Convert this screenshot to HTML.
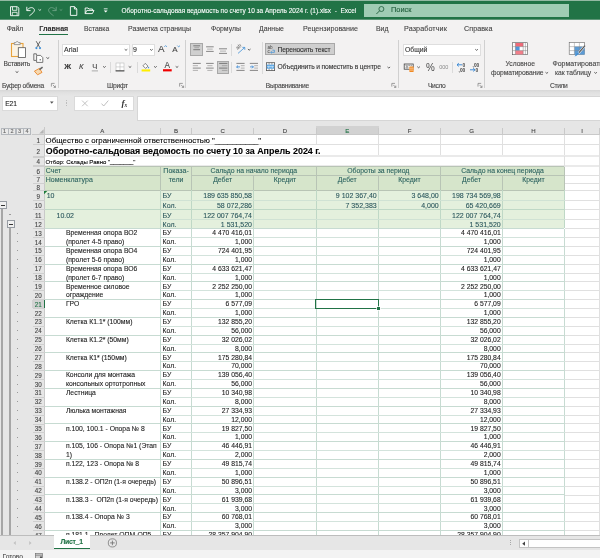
<!DOCTYPE html>
<html lang="ru"><head><meta charset="utf-8"><title>Excel</title>
<style>
html,body{margin:0;padding:0}
body{width:600px;height:558px;overflow:hidden;position:relative;background:#e6e6e6;font-family:"Liberation Sans", sans-serif;}
#root{position:absolute;left:0;top:0;width:600px;height:558px;overflow:hidden;will-change:transform}
.t{position:absolute;white-space:nowrap;-webkit-text-stroke:0.1px currentColor}
.a{position:absolute}
svg{position:absolute;overflow:visible}

</style></head><body><div id="root">
<div class="a" style="left:0.00px;top:0.00px;width:600.00px;height:19.60px;background:#217346;"></div>
<div class="a" style="left:0.00px;top:0.00px;width:600.00px;height:0.90px;background:#93b9a3;"></div>
<div class="a" style="left:0.00px;top:19.30px;width:600.00px;height:0.50px;background:#5f9678;"></div>
<div class="a" style="left:363.80px;top:4.00px;width:205.00px;height:12.60px;background:#a0ccb4;"></div>
<div class="a" style="left:0.00px;top:19.50px;width:600.00px;height:70.20px;background:#f3f2f2;"></div>
<div class="a" style="left:0.00px;top:89.70px;width:600.00px;height:6.60px;background:linear-gradient(#d7d7d7,#e0e0e0 40%,#e6e6e6);"></div>
<div class="a" style="left:39.30px;top:33.60px;width:29.20px;height:1.50px;background:#217346;"></div>
<div class="a" style="left:57.75px;top:39.50px;width:0.90px;height:48.50px;background:#d0d0d0;"></div>
<div class="a" style="left:185.15px;top:39.50px;width:0.90px;height:48.50px;background:#d0d0d0;"></div>
<div class="a" style="left:397.95px;top:39.50px;width:0.90px;height:48.50px;background:#d0d0d0;"></div>
<div class="a" style="left:483.95px;top:39.50px;width:0.90px;height:48.50px;background:#d0d0d0;"></div>
<div class="a" style="left:110.20px;top:61.50px;width:0.80px;height:11.50px;background:#dadada;"></div>
<div class="a" style="left:137.20px;top:61.50px;width:0.80px;height:11.50px;background:#dadada;"></div>
<div class="a" style="left:231.20px;top:43.50px;width:0.80px;height:12.00px;background:#dadada;"></div>
<div class="a" style="left:231.20px;top:61.50px;width:0.80px;height:11.50px;background:#dadada;"></div>
<div class="a" style="left:262.00px;top:42.00px;width:0.80px;height:32.00px;background:#dadada;"></div>
<div class="a" style="left:452.00px;top:61.50px;width:0.80px;height:11.50px;background:#dadada;"></div>
<div class="a" style="left:62.00px;top:43.60px;width:67.80px;height:12.00px;background:#fff;box-sizing:border-box;border:0.7px solid #dedede;"></div>
<div class="a" style="left:131.60px;top:43.60px;width:23.00px;height:12.00px;background:#fff;box-sizing:border-box;border:0.7px solid #dedede;"></div>
<div class="a" style="left:402.60px;top:43.60px;width:78.00px;height:12.00px;background:#fff;box-sizing:border-box;border:0.7px solid #dedede;"></div>
<div class="a" style="left:190.40px;top:43.00px;width:12.40px;height:12.80px;background:#cfcfcf;box-sizing:border-box;border:0.7px solid #a8a8a8;"></div>
<div class="a" style="left:217.00px;top:61.00px;width:12.40px;height:12.80px;background:#cfcfcf;box-sizing:border-box;border:0.7px solid #a8a8a8;"></div>
<div class="a" style="left:265.00px;top:43.40px;width:69.80px;height:12.00px;background:#cfcfcf;box-sizing:border-box;border:0.7px solid #a8a8a8;"></div>
<div class="a" style="left:1.50px;top:96.00px;width:56.00px;height:14.70px;background:#fff;box-sizing:border-box;border:0.7px solid #dadada;"></div>
<div class="a" style="left:74.30px;top:96.00px;width:60.10px;height:14.70px;background:#fff;box-sizing:border-box;border:0.7px solid #dadada;"></div>
<div class="a" style="left:137.00px;top:96.20px;width:463.00px;height:25.00px;background:#fff;box-sizing:border-box;border:0.7px solid #d6d6d6;border-right:0;"></div>
<div class="a" style="left:65.50px;top:100.20px;width:0.90px;height:0.90px;background:#bdbdbd;"></div>
<div class="a" style="left:65.50px;top:101.80px;width:0.90px;height:0.90px;background:#bdbdbd;"></div>
<div class="a" style="left:65.50px;top:103.40px;width:0.90px;height:0.90px;background:#bdbdbd;"></div>
<div class="a" style="left:65.50px;top:105.00px;width:0.90px;height:0.90px;background:#bdbdbd;"></div>
<div class="a" style="left:44.30px;top:134.50px;width:556.00px;height:400.90px;background:#fff;"></div>
<div class="a" style="left:315.60px;top:134.80px;width:0.80px;height:9.40px;background:#e0e0e0;"></div>
<div class="a" style="left:378.10px;top:134.80px;width:0.80px;height:9.40px;background:#e0e0e0;"></div>
<div class="a" style="left:440.10px;top:134.80px;width:0.80px;height:9.40px;background:#e0e0e0;"></div>
<div class="a" style="left:502.10px;top:134.80px;width:0.80px;height:9.40px;background:#e0e0e0;"></div>
<div class="a" style="left:564.10px;top:134.80px;width:0.80px;height:9.40px;background:#e0e0e0;"></div>
<div class="a" style="left:378.10px;top:144.20px;width:0.80px;height:11.80px;background:#e0e0e0;"></div>
<div class="a" style="left:440.10px;top:144.20px;width:0.80px;height:11.80px;background:#e0e0e0;"></div>
<div class="a" style="left:502.10px;top:144.20px;width:0.80px;height:11.80px;background:#e0e0e0;"></div>
<div class="a" style="left:564.10px;top:144.20px;width:0.80px;height:11.80px;background:#e0e0e0;"></div>
<div class="a" style="left:44.30px;top:143.80px;width:555.70px;height:0.80px;background:#e0e0e0;"></div>
<div class="a" style="left:44.30px;top:155.20px;width:556.00px;height:1.80px;background:#eaeaea;"></div>
<div class="a" style="left:44.30px;top:165.00px;width:556.00px;height:1.80px;background:#eaeaea;"></div>
<div class="a" style="left:564.10px;top:156.00px;width:0.80px;height:10.80px;background:#e0e0e0;"></div>
<div class="a" style="left:599.20px;top:156.00px;width:0.80px;height:10.80px;background:#e0e0e0;"></div>
<div class="a" style="left:44.30px;top:166.80px;width:520.20px;height:23.50px;background:#d6e5cb;"></div>
<div class="a" style="left:44.30px;top:190.30px;width:520.20px;height:38.20px;background:#e4f0dd;"></div>
<div class="a" style="left:564.05px;top:166.80px;width:0.90px;height:23.50px;background:#b8c4b5;"></div>
<div class="a" style="left:564.05px;top:190.30px;width:0.90px;height:38.20px;background:#bfd8c6;"></div>
<div class="a" style="left:564.05px;top:228.50px;width:0.90px;height:306.90px;background:#c7dbd2;"></div>
<div class="a" style="left:564.50px;top:174.80px;width:35.50px;height:0.80px;background:#e0e0e0;"></div>
<div class="a" style="left:564.50px;top:183.00px;width:35.50px;height:0.80px;background:#e0e0e0;"></div>
<div class="a" style="left:564.50px;top:189.90px;width:35.50px;height:0.80px;background:#e0e0e0;"></div>
<div class="a" style="left:564.50px;top:199.90px;width:35.50px;height:0.80px;background:#e0e0e0;"></div>
<div class="a" style="left:564.50px;top:209.30px;width:35.50px;height:0.80px;background:#e0e0e0;"></div>
<div class="a" style="left:564.50px;top:218.70px;width:35.50px;height:0.80px;background:#e0e0e0;"></div>
<div class="a" style="left:564.50px;top:228.10px;width:35.50px;height:0.80px;background:#e0e0e0;"></div>
<div class="a" style="left:564.50px;top:236.98px;width:35.50px;height:0.80px;background:#e0e0e0;"></div>
<div class="a" style="left:564.50px;top:245.86px;width:35.50px;height:0.80px;background:#e0e0e0;"></div>
<div class="a" style="left:564.50px;top:254.74px;width:35.50px;height:0.80px;background:#e0e0e0;"></div>
<div class="a" style="left:564.50px;top:263.62px;width:35.50px;height:0.80px;background:#e0e0e0;"></div>
<div class="a" style="left:564.50px;top:272.50px;width:35.50px;height:0.80px;background:#e0e0e0;"></div>
<div class="a" style="left:564.50px;top:281.38px;width:35.50px;height:0.80px;background:#e0e0e0;"></div>
<div class="a" style="left:564.50px;top:290.26px;width:35.50px;height:0.80px;background:#e0e0e0;"></div>
<div class="a" style="left:564.50px;top:299.14px;width:35.50px;height:0.80px;background:#e0e0e0;"></div>
<div class="a" style="left:564.50px;top:308.02px;width:35.50px;height:0.80px;background:#e0e0e0;"></div>
<div class="a" style="left:564.50px;top:316.90px;width:35.50px;height:0.80px;background:#e0e0e0;"></div>
<div class="a" style="left:564.50px;top:325.78px;width:35.50px;height:0.80px;background:#e0e0e0;"></div>
<div class="a" style="left:564.50px;top:334.66px;width:35.50px;height:0.80px;background:#e0e0e0;"></div>
<div class="a" style="left:564.50px;top:343.54px;width:35.50px;height:0.80px;background:#e0e0e0;"></div>
<div class="a" style="left:564.50px;top:352.42px;width:35.50px;height:0.80px;background:#e0e0e0;"></div>
<div class="a" style="left:564.50px;top:361.30px;width:35.50px;height:0.80px;background:#e0e0e0;"></div>
<div class="a" style="left:564.50px;top:370.18px;width:35.50px;height:0.80px;background:#e0e0e0;"></div>
<div class="a" style="left:564.50px;top:379.06px;width:35.50px;height:0.80px;background:#e0e0e0;"></div>
<div class="a" style="left:564.50px;top:387.94px;width:35.50px;height:0.80px;background:#e0e0e0;"></div>
<div class="a" style="left:564.50px;top:396.82px;width:35.50px;height:0.80px;background:#e0e0e0;"></div>
<div class="a" style="left:564.50px;top:405.70px;width:35.50px;height:0.80px;background:#e0e0e0;"></div>
<div class="a" style="left:564.50px;top:414.58px;width:35.50px;height:0.80px;background:#e0e0e0;"></div>
<div class="a" style="left:564.50px;top:423.46px;width:35.50px;height:0.80px;background:#e0e0e0;"></div>
<div class="a" style="left:564.50px;top:432.34px;width:35.50px;height:0.80px;background:#e0e0e0;"></div>
<div class="a" style="left:564.50px;top:441.22px;width:35.50px;height:0.80px;background:#e0e0e0;"></div>
<div class="a" style="left:564.50px;top:450.10px;width:35.50px;height:0.80px;background:#e0e0e0;"></div>
<div class="a" style="left:564.50px;top:458.98px;width:35.50px;height:0.80px;background:#e0e0e0;"></div>
<div class="a" style="left:564.50px;top:467.86px;width:35.50px;height:0.80px;background:#e0e0e0;"></div>
<div class="a" style="left:564.50px;top:476.74px;width:35.50px;height:0.80px;background:#e0e0e0;"></div>
<div class="a" style="left:564.50px;top:485.62px;width:35.50px;height:0.80px;background:#e0e0e0;"></div>
<div class="a" style="left:564.50px;top:494.50px;width:35.50px;height:0.80px;background:#e0e0e0;"></div>
<div class="a" style="left:564.50px;top:503.38px;width:35.50px;height:0.80px;background:#e0e0e0;"></div>
<div class="a" style="left:564.50px;top:512.26px;width:35.50px;height:0.80px;background:#e0e0e0;"></div>
<div class="a" style="left:564.50px;top:521.14px;width:35.50px;height:0.80px;background:#e0e0e0;"></div>
<div class="a" style="left:564.50px;top:530.02px;width:35.50px;height:0.80px;background:#e0e0e0;"></div>
<div class="a" style="left:564.50px;top:538.90px;width:35.50px;height:0.80px;background:#e0e0e0;"></div>
<div class="a" style="left:44.30px;top:166.40px;width:520.20px;height:0.80px;background:#b8c4b5;"></div>
<div class="a" style="left:44.30px;top:174.75px;width:116.20px;height:0.90px;background:#b8c4b5;"></div>
<div class="a" style="left:191.60px;top:174.75px;width:372.90px;height:0.90px;background:#b8c4b5;"></div>
<div class="a" style="left:44.30px;top:189.85px;width:520.20px;height:0.90px;background:#b8c4b5;"></div>
<div class="a" style="left:160.05px;top:166.80px;width:0.90px;height:23.50px;background:#b8c4b5;"></div>
<div class="a" style="left:191.15px;top:166.80px;width:0.90px;height:23.50px;background:#b8c4b5;"></div>
<div class="a" style="left:315.55px;top:166.80px;width:0.90px;height:23.50px;background:#b8c4b5;"></div>
<div class="a" style="left:440.05px;top:166.80px;width:0.90px;height:23.50px;background:#b8c4b5;"></div>
<div class="a" style="left:253.35px;top:175.20px;width:0.90px;height:15.10px;background:#b8c4b5;"></div>
<div class="a" style="left:378.05px;top:175.20px;width:0.90px;height:15.10px;background:#b8c4b5;"></div>
<div class="a" style="left:502.05px;top:175.20px;width:0.90px;height:15.10px;background:#b8c4b5;"></div>
<div class="a" style="left:160.05px;top:190.30px;width:0.90px;height:38.20px;background:#bfd8c6;"></div>
<div class="a" style="left:160.05px;top:228.50px;width:0.90px;height:306.90px;background:#c7dbd2;"></div>
<div class="a" style="left:191.15px;top:190.30px;width:0.90px;height:38.20px;background:#bfd8c6;"></div>
<div class="a" style="left:191.15px;top:228.50px;width:0.90px;height:306.90px;background:#c7dbd2;"></div>
<div class="a" style="left:253.35px;top:190.30px;width:0.90px;height:38.20px;background:#bfd8c6;"></div>
<div class="a" style="left:253.35px;top:228.50px;width:0.90px;height:306.90px;background:#c7dbd2;"></div>
<div class="a" style="left:315.55px;top:190.30px;width:0.90px;height:38.20px;background:#bfd8c6;"></div>
<div class="a" style="left:315.55px;top:228.50px;width:0.90px;height:306.90px;background:#c7dbd2;"></div>
<div class="a" style="left:378.05px;top:190.30px;width:0.90px;height:38.20px;background:#bfd8c6;"></div>
<div class="a" style="left:378.05px;top:228.50px;width:0.90px;height:306.90px;background:#c7dbd2;"></div>
<div class="a" style="left:440.05px;top:190.30px;width:0.90px;height:38.20px;background:#bfd8c6;"></div>
<div class="a" style="left:440.05px;top:228.50px;width:0.90px;height:306.90px;background:#c7dbd2;"></div>
<div class="a" style="left:502.05px;top:190.30px;width:0.90px;height:38.20px;background:#bfd8c6;"></div>
<div class="a" style="left:502.05px;top:228.50px;width:0.90px;height:306.90px;background:#c7dbd2;"></div>
<div class="a" style="left:160.50px;top:199.90px;width:404.00px;height:0.80px;background:#d0e2d4;"></div>
<div class="a" style="left:44.30px;top:209.25px;width:520.20px;height:0.90px;background:#bfd8c6;"></div>
<div class="a" style="left:160.50px;top:218.70px;width:404.00px;height:0.80px;background:#d0e2d4;"></div>
<div class="a" style="left:44.30px;top:228.05px;width:520.20px;height:0.90px;background:#c7dbd2;"></div>
<div class="a" style="left:160.50px;top:236.98px;width:404.00px;height:0.80px;background:#d3e3dc;"></div>
<div class="a" style="left:44.30px;top:245.81px;width:520.20px;height:0.90px;background:#c7dbd2;"></div>
<div class="a" style="left:160.50px;top:254.74px;width:404.00px;height:0.80px;background:#d3e3dc;"></div>
<div class="a" style="left:44.30px;top:263.57px;width:520.20px;height:0.90px;background:#c7dbd2;"></div>
<div class="a" style="left:160.50px;top:272.50px;width:404.00px;height:0.80px;background:#d3e3dc;"></div>
<div class="a" style="left:44.30px;top:281.33px;width:520.20px;height:0.90px;background:#c7dbd2;"></div>
<div class="a" style="left:160.50px;top:290.26px;width:404.00px;height:0.80px;background:#d3e3dc;"></div>
<div class="a" style="left:44.30px;top:299.09px;width:520.20px;height:0.90px;background:#c7dbd2;"></div>
<div class="a" style="left:160.50px;top:308.02px;width:404.00px;height:0.80px;background:#d3e3dc;"></div>
<div class="a" style="left:44.30px;top:316.85px;width:520.20px;height:0.90px;background:#c7dbd2;"></div>
<div class="a" style="left:160.50px;top:325.78px;width:404.00px;height:0.80px;background:#d3e3dc;"></div>
<div class="a" style="left:44.30px;top:334.61px;width:520.20px;height:0.90px;background:#c7dbd2;"></div>
<div class="a" style="left:160.50px;top:343.54px;width:404.00px;height:0.80px;background:#d3e3dc;"></div>
<div class="a" style="left:44.30px;top:352.37px;width:520.20px;height:0.90px;background:#c7dbd2;"></div>
<div class="a" style="left:160.50px;top:361.30px;width:404.00px;height:0.80px;background:#d3e3dc;"></div>
<div class="a" style="left:44.30px;top:370.13px;width:520.20px;height:0.90px;background:#c7dbd2;"></div>
<div class="a" style="left:160.50px;top:379.06px;width:404.00px;height:0.80px;background:#d3e3dc;"></div>
<div class="a" style="left:44.30px;top:387.89px;width:520.20px;height:0.90px;background:#c7dbd2;"></div>
<div class="a" style="left:160.50px;top:396.82px;width:404.00px;height:0.80px;background:#d3e3dc;"></div>
<div class="a" style="left:44.30px;top:405.65px;width:520.20px;height:0.90px;background:#c7dbd2;"></div>
<div class="a" style="left:160.50px;top:414.58px;width:404.00px;height:0.80px;background:#d3e3dc;"></div>
<div class="a" style="left:44.30px;top:423.41px;width:520.20px;height:0.90px;background:#c7dbd2;"></div>
<div class="a" style="left:160.50px;top:432.34px;width:404.00px;height:0.80px;background:#d3e3dc;"></div>
<div class="a" style="left:44.30px;top:441.17px;width:520.20px;height:0.90px;background:#c7dbd2;"></div>
<div class="a" style="left:160.50px;top:450.10px;width:404.00px;height:0.80px;background:#d3e3dc;"></div>
<div class="a" style="left:44.30px;top:458.93px;width:520.20px;height:0.90px;background:#c7dbd2;"></div>
<div class="a" style="left:160.50px;top:467.86px;width:404.00px;height:0.80px;background:#d3e3dc;"></div>
<div class="a" style="left:44.30px;top:476.69px;width:520.20px;height:0.90px;background:#c7dbd2;"></div>
<div class="a" style="left:160.50px;top:485.62px;width:404.00px;height:0.80px;background:#d3e3dc;"></div>
<div class="a" style="left:44.30px;top:494.45px;width:520.20px;height:0.90px;background:#c7dbd2;"></div>
<div class="a" style="left:160.50px;top:503.38px;width:404.00px;height:0.80px;background:#d3e3dc;"></div>
<div class="a" style="left:44.30px;top:512.21px;width:520.20px;height:0.90px;background:#c7dbd2;"></div>
<div class="a" style="left:160.50px;top:521.14px;width:404.00px;height:0.80px;background:#d3e3dc;"></div>
<div class="a" style="left:44.30px;top:529.97px;width:520.20px;height:0.90px;background:#c7dbd2;"></div>
<div class="a" style="left:0.00px;top:126.00px;width:45.00px;height:409.40px;background:#e6e6e6;"></div>
<div class="a" style="left:44.30px;top:126.00px;width:556.00px;height:8.50px;background:#e6e6e6;"></div>
<div class="a" style="left:316.00px;top:126.30px;width:62.50px;height:8.20px;background:#d2d2d2;"></div>
<div class="a" style="left:316.00px;top:133.60px;width:62.50px;height:1.10px;background:#217346;"></div>
<div class="a" style="left:32.00px;top:134.15px;width:568.00px;height:0.70px;background:#c9c9c9;"></div>
<div class="t" style="top:127.34px;font-size:6.10px;line-height:7.01px;color:#444;left:-47.60px;width:300px;text-align:center;">A</div>
<div class="a" style="left:160.15px;top:127.50px;width:0.70px;height:7.00px;background:#c9c9c9;"></div>
<div class="t" style="top:127.34px;font-size:6.10px;line-height:7.01px;color:#444;left:26.05px;width:300px;text-align:center;">B</div>
<div class="a" style="left:191.25px;top:127.50px;width:0.70px;height:7.00px;background:#c9c9c9;"></div>
<div class="t" style="top:127.34px;font-size:6.10px;line-height:7.01px;color:#444;left:72.70px;width:300px;text-align:center;">C</div>
<div class="a" style="left:253.45px;top:127.50px;width:0.70px;height:7.00px;background:#c9c9c9;"></div>
<div class="t" style="top:127.34px;font-size:6.10px;line-height:7.01px;color:#444;left:134.90px;width:300px;text-align:center;">D</div>
<div class="a" style="left:315.65px;top:127.50px;width:0.70px;height:7.00px;background:#c9c9c9;"></div>
<div class="t" style="top:127.34px;font-size:6.10px;line-height:7.01px;color:#217346;left:197.25px;width:300px;text-align:center;">E</div>
<div class="a" style="left:378.15px;top:127.50px;width:0.70px;height:7.00px;background:#c9c9c9;"></div>
<div class="t" style="top:127.34px;font-size:6.10px;line-height:7.01px;color:#444;left:259.50px;width:300px;text-align:center;">F</div>
<div class="a" style="left:440.15px;top:127.50px;width:0.70px;height:7.00px;background:#c9c9c9;"></div>
<div class="t" style="top:127.34px;font-size:6.10px;line-height:7.01px;color:#444;left:321.50px;width:300px;text-align:center;">G</div>
<div class="a" style="left:502.15px;top:127.50px;width:0.70px;height:7.00px;background:#c9c9c9;"></div>
<div class="t" style="top:127.34px;font-size:6.10px;line-height:7.01px;color:#444;left:383.50px;width:300px;text-align:center;">H</div>
<div class="a" style="left:564.15px;top:127.50px;width:0.70px;height:7.00px;background:#c9c9c9;"></div>
<div class="a" style="left:599.25px;top:127.50px;width:0.70px;height:7.00px;background:#c9c9c9;"></div>
<div class="a" style="left:599.20px;top:134.80px;width:0.80px;height:21.20px;background:#e0e0e0;"></div>
<div class="a" style="left:599.20px;top:166.80px;width:0.80px;height:368.60px;background:#e0e0e0;"></div>
<div class="t" style="top:127.34px;font-size:6.10px;line-height:7.01px;color:#444;left:432.05px;width:300px;text-align:center;">I</div>
<div class="a" style="left:43.95px;top:126.50px;width:0.70px;height:408.90px;background:#c9c9c9;"></div>
<div class="a" style="left:32.50px;top:143.85px;width:12.50px;height:0.70px;background:#cfcfcf;"></div>
<div class="t" style="top:137.18px;font-size:6.30px;line-height:7.24px;color:#444;left:-111.80px;width:300px;text-align:center;">1</div>
<div class="a" style="left:32.50px;top:155.65px;width:12.50px;height:0.70px;background:#cfcfcf;"></div>
<div class="t" style="top:147.78px;font-size:6.30px;line-height:7.24px;color:#444;left:-111.80px;width:300px;text-align:center;">2</div>
<div class="a" style="left:32.50px;top:164.85px;width:12.50px;height:0.70px;background:#cfcfcf;"></div>
<div class="t" style="top:157.73px;font-size:6.30px;line-height:7.24px;color:#444;left:-111.80px;width:300px;text-align:center;">4</div>
<div class="a" style="left:32.50px;top:174.85px;width:12.50px;height:0.70px;background:#cfcfcf;"></div>
<div class="t" style="top:167.68px;font-size:6.30px;line-height:7.24px;color:#444;left:-111.80px;width:300px;text-align:center;">6</div>
<div class="a" style="left:32.50px;top:183.05px;width:12.50px;height:0.70px;background:#cfcfcf;"></div>
<div class="t" style="top:175.98px;font-size:6.30px;line-height:7.24px;color:#444;left:-111.80px;width:300px;text-align:center;">7</div>
<div class="a" style="left:32.50px;top:189.95px;width:12.50px;height:0.70px;background:#cfcfcf;"></div>
<div class="t" style="top:183.53px;font-size:6.30px;line-height:7.24px;color:#444;left:-111.80px;width:300px;text-align:center;">8</div>
<div class="a" style="left:32.50px;top:199.95px;width:12.50px;height:0.70px;background:#cfcfcf;"></div>
<div class="t" style="top:192.78px;font-size:6.30px;line-height:7.24px;color:#444;left:-111.80px;width:300px;text-align:center;">9</div>
<div class="a" style="left:32.50px;top:209.35px;width:12.50px;height:0.70px;background:#cfcfcf;"></div>
<div class="t" style="top:202.48px;font-size:6.30px;line-height:7.24px;color:#444;left:-111.80px;width:300px;text-align:center;">10</div>
<div class="a" style="left:32.50px;top:218.75px;width:12.50px;height:0.70px;background:#cfcfcf;"></div>
<div class="t" style="top:211.88px;font-size:6.30px;line-height:7.24px;color:#444;left:-111.80px;width:300px;text-align:center;">11</div>
<div class="a" style="left:32.50px;top:228.15px;width:12.50px;height:0.70px;background:#cfcfcf;"></div>
<div class="t" style="top:221.28px;font-size:6.30px;line-height:7.24px;color:#444;left:-111.80px;width:300px;text-align:center;">12</div>
<div class="a" style="left:32.50px;top:237.03px;width:12.50px;height:0.70px;background:#cfcfcf;"></div>
<div class="t" style="top:229.62px;font-size:6.30px;line-height:7.24px;color:#444;left:-111.80px;width:300px;text-align:center;">13</div>
<div class="a" style="left:32.50px;top:245.91px;width:12.50px;height:0.70px;background:#cfcfcf;"></div>
<div class="t" style="top:238.50px;font-size:6.30px;line-height:7.24px;color:#444;left:-111.80px;width:300px;text-align:center;">14</div>
<div class="a" style="left:32.50px;top:254.79px;width:12.50px;height:0.70px;background:#cfcfcf;"></div>
<div class="t" style="top:247.38px;font-size:6.30px;line-height:7.24px;color:#444;left:-111.80px;width:300px;text-align:center;">15</div>
<div class="a" style="left:32.50px;top:263.67px;width:12.50px;height:0.70px;background:#cfcfcf;"></div>
<div class="t" style="top:256.26px;font-size:6.30px;line-height:7.24px;color:#444;left:-111.80px;width:300px;text-align:center;">16</div>
<div class="a" style="left:32.50px;top:272.55px;width:12.50px;height:0.70px;background:#cfcfcf;"></div>
<div class="t" style="top:265.14px;font-size:6.30px;line-height:7.24px;color:#444;left:-111.80px;width:300px;text-align:center;">17</div>
<div class="a" style="left:32.50px;top:281.43px;width:12.50px;height:0.70px;background:#cfcfcf;"></div>
<div class="t" style="top:274.02px;font-size:6.30px;line-height:7.24px;color:#444;left:-111.80px;width:300px;text-align:center;">18</div>
<div class="a" style="left:32.50px;top:290.31px;width:12.50px;height:0.70px;background:#cfcfcf;"></div>
<div class="t" style="top:282.90px;font-size:6.30px;line-height:7.24px;color:#444;left:-111.80px;width:300px;text-align:center;">19</div>
<div class="a" style="left:32.50px;top:299.19px;width:12.50px;height:0.70px;background:#cfcfcf;"></div>
<div class="t" style="top:291.78px;font-size:6.30px;line-height:7.24px;color:#444;left:-111.80px;width:300px;text-align:center;">20</div>
<div class="a" style="left:32.00px;top:299.54px;width:13.00px;height:8.88px;background:#d2d2d2;"></div>
<div class="a" style="left:44.00px;top:299.54px;width:1.10px;height:8.88px;background:#217346;"></div>
<div class="a" style="left:32.50px;top:308.07px;width:12.50px;height:0.70px;background:#cfcfcf;"></div>
<div class="t" style="top:300.66px;font-size:6.30px;line-height:7.24px;color:#217346;left:-111.80px;width:300px;text-align:center;">21</div>
<div class="a" style="left:32.50px;top:316.95px;width:12.50px;height:0.70px;background:#cfcfcf;"></div>
<div class="t" style="top:309.54px;font-size:6.30px;line-height:7.24px;color:#444;left:-111.80px;width:300px;text-align:center;">22</div>
<div class="a" style="left:32.50px;top:325.83px;width:12.50px;height:0.70px;background:#cfcfcf;"></div>
<div class="t" style="top:318.42px;font-size:6.30px;line-height:7.24px;color:#444;left:-111.80px;width:300px;text-align:center;">23</div>
<div class="a" style="left:32.50px;top:334.71px;width:12.50px;height:0.70px;background:#cfcfcf;"></div>
<div class="t" style="top:327.30px;font-size:6.30px;line-height:7.24px;color:#444;left:-111.80px;width:300px;text-align:center;">24</div>
<div class="a" style="left:32.50px;top:343.59px;width:12.50px;height:0.70px;background:#cfcfcf;"></div>
<div class="t" style="top:336.18px;font-size:6.30px;line-height:7.24px;color:#444;left:-111.80px;width:300px;text-align:center;">25</div>
<div class="a" style="left:32.50px;top:352.47px;width:12.50px;height:0.70px;background:#cfcfcf;"></div>
<div class="t" style="top:345.06px;font-size:6.30px;line-height:7.24px;color:#444;left:-111.80px;width:300px;text-align:center;">26</div>
<div class="a" style="left:32.50px;top:361.35px;width:12.50px;height:0.70px;background:#cfcfcf;"></div>
<div class="t" style="top:353.94px;font-size:6.30px;line-height:7.24px;color:#444;left:-111.80px;width:300px;text-align:center;">27</div>
<div class="a" style="left:32.50px;top:370.23px;width:12.50px;height:0.70px;background:#cfcfcf;"></div>
<div class="t" style="top:362.82px;font-size:6.30px;line-height:7.24px;color:#444;left:-111.80px;width:300px;text-align:center;">28</div>
<div class="a" style="left:32.50px;top:379.11px;width:12.50px;height:0.70px;background:#cfcfcf;"></div>
<div class="t" style="top:371.70px;font-size:6.30px;line-height:7.24px;color:#444;left:-111.80px;width:300px;text-align:center;">29</div>
<div class="a" style="left:32.50px;top:387.99px;width:12.50px;height:0.70px;background:#cfcfcf;"></div>
<div class="t" style="top:380.58px;font-size:6.30px;line-height:7.24px;color:#444;left:-111.80px;width:300px;text-align:center;">30</div>
<div class="a" style="left:32.50px;top:396.87px;width:12.50px;height:0.70px;background:#cfcfcf;"></div>
<div class="t" style="top:389.46px;font-size:6.30px;line-height:7.24px;color:#444;left:-111.80px;width:300px;text-align:center;">31</div>
<div class="a" style="left:32.50px;top:405.75px;width:12.50px;height:0.70px;background:#cfcfcf;"></div>
<div class="t" style="top:398.34px;font-size:6.30px;line-height:7.24px;color:#444;left:-111.80px;width:300px;text-align:center;">32</div>
<div class="a" style="left:32.50px;top:414.63px;width:12.50px;height:0.70px;background:#cfcfcf;"></div>
<div class="t" style="top:407.22px;font-size:6.30px;line-height:7.24px;color:#444;left:-111.80px;width:300px;text-align:center;">33</div>
<div class="a" style="left:32.50px;top:423.51px;width:12.50px;height:0.70px;background:#cfcfcf;"></div>
<div class="t" style="top:416.10px;font-size:6.30px;line-height:7.24px;color:#444;left:-111.80px;width:300px;text-align:center;">34</div>
<div class="a" style="left:32.50px;top:432.39px;width:12.50px;height:0.70px;background:#cfcfcf;"></div>
<div class="t" style="top:424.98px;font-size:6.30px;line-height:7.24px;color:#444;left:-111.80px;width:300px;text-align:center;">35</div>
<div class="a" style="left:32.50px;top:441.27px;width:12.50px;height:0.70px;background:#cfcfcf;"></div>
<div class="t" style="top:433.86px;font-size:6.30px;line-height:7.24px;color:#444;left:-111.80px;width:300px;text-align:center;">36</div>
<div class="a" style="left:32.50px;top:450.15px;width:12.50px;height:0.70px;background:#cfcfcf;"></div>
<div class="t" style="top:442.74px;font-size:6.30px;line-height:7.24px;color:#444;left:-111.80px;width:300px;text-align:center;">37</div>
<div class="a" style="left:32.50px;top:459.03px;width:12.50px;height:0.70px;background:#cfcfcf;"></div>
<div class="t" style="top:451.62px;font-size:6.30px;line-height:7.24px;color:#444;left:-111.80px;width:300px;text-align:center;">38</div>
<div class="a" style="left:32.50px;top:467.91px;width:12.50px;height:0.70px;background:#cfcfcf;"></div>
<div class="t" style="top:460.50px;font-size:6.30px;line-height:7.24px;color:#444;left:-111.80px;width:300px;text-align:center;">39</div>
<div class="a" style="left:32.50px;top:476.79px;width:12.50px;height:0.70px;background:#cfcfcf;"></div>
<div class="t" style="top:469.38px;font-size:6.30px;line-height:7.24px;color:#444;left:-111.80px;width:300px;text-align:center;">40</div>
<div class="a" style="left:32.50px;top:485.67px;width:12.50px;height:0.70px;background:#cfcfcf;"></div>
<div class="t" style="top:478.26px;font-size:6.30px;line-height:7.24px;color:#444;left:-111.80px;width:300px;text-align:center;">41</div>
<div class="a" style="left:32.50px;top:494.55px;width:12.50px;height:0.70px;background:#cfcfcf;"></div>
<div class="t" style="top:487.14px;font-size:6.30px;line-height:7.24px;color:#444;left:-111.80px;width:300px;text-align:center;">42</div>
<div class="a" style="left:32.50px;top:503.43px;width:12.50px;height:0.70px;background:#cfcfcf;"></div>
<div class="t" style="top:496.02px;font-size:6.30px;line-height:7.24px;color:#444;left:-111.80px;width:300px;text-align:center;">43</div>
<div class="a" style="left:32.50px;top:512.31px;width:12.50px;height:0.70px;background:#cfcfcf;"></div>
<div class="t" style="top:504.90px;font-size:6.30px;line-height:7.24px;color:#444;left:-111.80px;width:300px;text-align:center;">44</div>
<div class="a" style="left:32.50px;top:521.19px;width:12.50px;height:0.70px;background:#cfcfcf;"></div>
<div class="t" style="top:513.78px;font-size:6.30px;line-height:7.24px;color:#444;left:-111.80px;width:300px;text-align:center;">45</div>
<div class="a" style="left:32.50px;top:530.07px;width:12.50px;height:0.70px;background:#cfcfcf;"></div>
<div class="t" style="top:522.66px;font-size:6.30px;line-height:7.24px;color:#444;left:-111.80px;width:300px;text-align:center;">46</div>
<div class="a" style="left:32.50px;top:535.05px;width:12.50px;height:0.70px;background:#cfcfcf;"></div>
<div class="t" style="top:531.54px;font-size:6.30px;line-height:7.24px;color:#444;left:-111.80px;width:300px;text-align:center;">47</div>
<div class="a" style="left:32.50px;top:156.40px;width:12.50px;height:1.20px;background:#cfcfcf;"></div>
<div class="a" style="left:32.50px;top:165.40px;width:12.50px;height:1.20px;background:#cfcfcf;"></div>
<div class="a" style="left:0.60px;top:127.60px;width:8.00px;height:7.30px;background:#e9e9e9;box-sizing:border-box;border:0.6px solid #b4b8bd;"></div>
<div class="t" style="top:128.24px;font-size:5.50px;line-height:6.32px;color:#666;left:-145.40px;width:300px;text-align:center;">1</div>
<div class="a" style="left:8.05px;top:127.60px;width:8.00px;height:7.30px;background:#e9e9e9;box-sizing:border-box;border:0.6px solid #b4b8bd;"></div>
<div class="t" style="top:128.24px;font-size:5.50px;line-height:6.32px;color:#666;left:-137.95px;width:300px;text-align:center;">2</div>
<div class="a" style="left:15.50px;top:127.60px;width:8.00px;height:7.30px;background:#e9e9e9;box-sizing:border-box;border:0.6px solid #b4b8bd;"></div>
<div class="t" style="top:128.24px;font-size:5.50px;line-height:6.32px;color:#666;left:-130.50px;width:300px;text-align:center;">3</div>
<div class="a" style="left:22.95px;top:127.60px;width:8.00px;height:7.30px;background:#e9e9e9;box-sizing:border-box;border:0.6px solid #b4b8bd;"></div>
<div class="t" style="top:128.24px;font-size:5.50px;line-height:6.32px;color:#666;left:-123.05px;width:300px;text-align:center;">4</div>
<div class="a" style="left:1.25px;top:209.00px;width:1.50px;height:326.40px;background:#a6a6a6;"></div>
<div class="a" style="left:9.15px;top:228.00px;width:1.60px;height:307.40px;background:#a6a6a6;"></div>
<div class="a" style="left:-1.00px;top:201.20px;width:7.90px;height:7.80px;background:#f0f0f0;box-sizing:border-box;border:0.8px solid #979ca3;"></div>
<div class="a" style="left:0.90px;top:204.60px;width:4.10px;height:1.00px;background:#333;"></div>
<div class="a" style="left:7.00px;top:220.20px;width:7.90px;height:7.80px;background:#f0f0f0;box-sizing:border-box;border:0.8px solid #979ca3;"></div>
<div class="a" style="left:8.90px;top:223.60px;width:4.10px;height:1.00px;background:#333;"></div>
<div class="a" style="left:9.20px;top:214.00px;width:1.50px;height:0.80px;background:#9a9a9a;"></div>
<div class="a" style="left:17.20px;top:232.54px;width:0.90px;height:0.90px;background:#9a9a9a;"></div>
<div class="a" style="left:17.20px;top:241.42px;width:0.90px;height:0.90px;background:#9a9a9a;"></div>
<div class="a" style="left:17.20px;top:250.30px;width:0.90px;height:0.90px;background:#9a9a9a;"></div>
<div class="a" style="left:17.20px;top:259.18px;width:0.90px;height:0.90px;background:#9a9a9a;"></div>
<div class="a" style="left:17.20px;top:268.06px;width:0.90px;height:0.90px;background:#9a9a9a;"></div>
<div class="a" style="left:17.20px;top:276.94px;width:0.90px;height:0.90px;background:#9a9a9a;"></div>
<div class="a" style="left:17.20px;top:285.82px;width:0.90px;height:0.90px;background:#9a9a9a;"></div>
<div class="a" style="left:17.20px;top:294.70px;width:0.90px;height:0.90px;background:#9a9a9a;"></div>
<div class="a" style="left:17.20px;top:303.58px;width:0.90px;height:0.90px;background:#9a9a9a;"></div>
<div class="a" style="left:17.20px;top:312.46px;width:0.90px;height:0.90px;background:#9a9a9a;"></div>
<div class="a" style="left:17.20px;top:321.34px;width:0.90px;height:0.90px;background:#9a9a9a;"></div>
<div class="a" style="left:17.20px;top:330.22px;width:0.90px;height:0.90px;background:#9a9a9a;"></div>
<div class="a" style="left:17.20px;top:339.10px;width:0.90px;height:0.90px;background:#9a9a9a;"></div>
<div class="a" style="left:17.20px;top:347.98px;width:0.90px;height:0.90px;background:#9a9a9a;"></div>
<div class="a" style="left:17.20px;top:356.86px;width:0.90px;height:0.90px;background:#9a9a9a;"></div>
<div class="a" style="left:17.20px;top:365.74px;width:0.90px;height:0.90px;background:#9a9a9a;"></div>
<div class="a" style="left:17.20px;top:374.62px;width:0.90px;height:0.90px;background:#9a9a9a;"></div>
<div class="a" style="left:17.20px;top:383.50px;width:0.90px;height:0.90px;background:#9a9a9a;"></div>
<div class="a" style="left:17.20px;top:392.38px;width:0.90px;height:0.90px;background:#9a9a9a;"></div>
<div class="a" style="left:17.20px;top:401.26px;width:0.90px;height:0.90px;background:#9a9a9a;"></div>
<div class="a" style="left:17.20px;top:410.14px;width:0.90px;height:0.90px;background:#9a9a9a;"></div>
<div class="a" style="left:17.20px;top:419.02px;width:0.90px;height:0.90px;background:#9a9a9a;"></div>
<div class="a" style="left:17.20px;top:427.90px;width:0.90px;height:0.90px;background:#9a9a9a;"></div>
<div class="a" style="left:17.20px;top:436.78px;width:0.90px;height:0.90px;background:#9a9a9a;"></div>
<div class="a" style="left:17.20px;top:445.66px;width:0.90px;height:0.90px;background:#9a9a9a;"></div>
<div class="a" style="left:17.20px;top:454.54px;width:0.90px;height:0.90px;background:#9a9a9a;"></div>
<div class="a" style="left:17.20px;top:463.42px;width:0.90px;height:0.90px;background:#9a9a9a;"></div>
<div class="a" style="left:17.20px;top:472.30px;width:0.90px;height:0.90px;background:#9a9a9a;"></div>
<div class="a" style="left:17.20px;top:481.18px;width:0.90px;height:0.90px;background:#9a9a9a;"></div>
<div class="a" style="left:17.20px;top:490.06px;width:0.90px;height:0.90px;background:#9a9a9a;"></div>
<div class="a" style="left:17.20px;top:498.94px;width:0.90px;height:0.90px;background:#9a9a9a;"></div>
<div class="a" style="left:17.20px;top:507.82px;width:0.90px;height:0.90px;background:#9a9a9a;"></div>
<div class="a" style="left:17.20px;top:516.70px;width:0.90px;height:0.90px;background:#9a9a9a;"></div>
<div class="a" style="left:17.20px;top:525.58px;width:0.90px;height:0.90px;background:#9a9a9a;"></div>
<div class="t" style="top:136.09px;font-size:7.85px;line-height:9.03px;color:#000;left:45.60px;">Общество с ограниченной ответственностью &quot;__________&quot;</div>
<div class="t" style="top:145.67px;font-size:8.92px;line-height:10.26px;color:#000;font-weight:bold;left:45.80px;">Оборотно-сальдовая ведомость по счету 10 за Апрель 2024 г.</div>
<div class="t" style="top:158.57px;font-size:5.97px;line-height:6.87px;color:#000;left:45.40px;">Отбор: Склады Равно &quot;_______&quot;</div>
<div class="t" style="top:166.88px;font-size:7.00px;line-height:8.05px;color:#2b625f;left:45.80px;">Счет</div>
<div class="t" style="top:176.28px;font-size:7.00px;line-height:8.05px;color:#2b625f;left:45.80px;">Номенклатура</div>
<div class="t" style="top:166.88px;font-size:7.00px;line-height:8.05px;color:#2b625f;left:26.05px;width:300px;text-align:center;">Показа-</div>
<div class="t" style="top:175.78px;font-size:7.00px;line-height:8.05px;color:#2b625f;left:26.05px;width:300px;text-align:center;">тели</div>
<div class="t" style="top:166.96px;font-size:6.85px;line-height:7.88px;color:#2b625f;left:103.80px;width:300px;text-align:center;">Сальдо на начало периода</div>
<div class="t" style="top:166.96px;font-size:6.85px;line-height:7.88px;color:#2b625f;left:228.25px;width:300px;text-align:center;">Обороты за период</div>
<div class="t" style="top:166.96px;font-size:6.85px;line-height:7.88px;color:#2b625f;left:352.50px;width:300px;text-align:center;">Сальдо на конец периода</div>
<div class="t" style="top:176.06px;font-size:6.85px;line-height:7.88px;color:#2b625f;left:72.70px;width:300px;text-align:center;">Дебет</div>
<div class="t" style="top:176.06px;font-size:6.85px;line-height:7.88px;color:#2b625f;left:134.90px;width:300px;text-align:center;">Кредит</div>
<div class="t" style="top:176.06px;font-size:6.85px;line-height:7.88px;color:#2b625f;left:197.25px;width:300px;text-align:center;">Дебет</div>
<div class="t" style="top:176.06px;font-size:6.85px;line-height:7.88px;color:#2b625f;left:259.50px;width:300px;text-align:center;">Кредит</div>
<div class="t" style="top:176.06px;font-size:6.85px;line-height:7.88px;color:#2b625f;left:321.50px;width:300px;text-align:center;">Дебет</div>
<div class="t" style="top:176.06px;font-size:6.85px;line-height:7.88px;color:#2b625f;left:383.50px;width:300px;text-align:center;">Кредит</div>
<div class="t" style="top:192.47px;font-size:7.00px;line-height:8.05px;color:#2a565c;left:46.70px;">10</div>
<div class="t" style="top:192.47px;font-size:7.00px;line-height:8.05px;color:#2a565c;left:162.60px;">БУ</div>
<div class="t" style="top:192.47px;font-size:7.00px;line-height:8.05px;color:#2a565c;left:-48.00px;width:300px;text-align:right;">189 635 850,58</div>
<div class="t" style="top:192.47px;font-size:7.00px;line-height:8.05px;color:#2a565c;left:76.70px;width:300px;text-align:right;">9 102 367,40</div>
<div class="t" style="top:192.47px;font-size:7.00px;line-height:8.05px;color:#2a565c;left:138.70px;width:300px;text-align:right;">3 648,00</div>
<div class="t" style="top:192.47px;font-size:7.00px;line-height:8.05px;color:#2a565c;left:200.70px;width:300px;text-align:right;">198 734 569,98</div>
<div class="t" style="top:202.17px;font-size:7.00px;line-height:8.05px;color:#2a565c;left:162.60px;">Кол.</div>
<div class="t" style="top:202.17px;font-size:7.00px;line-height:8.05px;color:#2a565c;left:-48.00px;width:300px;text-align:right;">58 072,286</div>
<div class="t" style="top:202.17px;font-size:7.00px;line-height:8.05px;color:#2a565c;left:76.70px;width:300px;text-align:right;">7 352,383</div>
<div class="t" style="top:202.17px;font-size:7.00px;line-height:8.05px;color:#2a565c;left:138.70px;width:300px;text-align:right;">4,000</div>
<div class="t" style="top:202.17px;font-size:7.00px;line-height:8.05px;color:#2a565c;left:200.70px;width:300px;text-align:right;">65 420,669</div>
<div class="t" style="top:211.57px;font-size:7.00px;line-height:8.05px;color:#2a565c;left:56.50px;">10.02</div>
<div class="t" style="top:211.57px;font-size:7.00px;line-height:8.05px;color:#2a565c;left:162.60px;">БУ</div>
<div class="t" style="top:211.57px;font-size:7.00px;line-height:8.05px;color:#2a565c;left:-48.00px;width:300px;text-align:right;">122 007 764,74</div>
<div class="t" style="top:211.57px;font-size:7.00px;line-height:8.05px;color:#2a565c;left:200.70px;width:300px;text-align:right;">122 007 764,74</div>
<div class="t" style="top:220.97px;font-size:7.00px;line-height:8.05px;color:#2a565c;left:162.60px;">Кол.</div>
<div class="t" style="top:220.97px;font-size:7.00px;line-height:8.05px;color:#2a565c;left:-48.00px;width:300px;text-align:right;">1 531,520</div>
<div class="t" style="top:220.97px;font-size:7.00px;line-height:8.05px;color:#2a565c;left:200.70px;width:300px;text-align:right;">1 531,520</div>
<div class="t" style="top:229.23px;font-size:6.80px;line-height:7.82px;color:#1c1c1c;left:65.90px;white-space:pre;">Временная опора ВО2</div>
<div class="t" style="top:229.23px;font-size:6.80px;line-height:7.82px;color:#1c1c1c;left:162.60px;">БУ</div>
<div class="t" style="top:229.23px;font-size:6.80px;line-height:7.82px;color:#1c1c1c;left:-48.00px;width:300px;text-align:right;">4 470 416,01</div>
<div class="t" style="top:229.23px;font-size:6.80px;line-height:7.82px;color:#1c1c1c;left:200.70px;width:300px;text-align:right;">4 470 416,01</div>
<div class="t" style="top:238.11px;font-size:6.80px;line-height:7.82px;color:#1c1c1c;left:65.90px;white-space:pre;">(пролет 4-5 право)</div>
<div class="t" style="top:238.11px;font-size:6.80px;line-height:7.82px;color:#1c1c1c;left:162.60px;">Кол.</div>
<div class="t" style="top:238.11px;font-size:6.80px;line-height:7.82px;color:#1c1c1c;left:-48.00px;width:300px;text-align:right;">1,000</div>
<div class="t" style="top:238.11px;font-size:6.80px;line-height:7.82px;color:#1c1c1c;left:200.70px;width:300px;text-align:right;">1,000</div>
<div class="t" style="top:246.99px;font-size:6.80px;line-height:7.82px;color:#1c1c1c;left:65.90px;white-space:pre;">Временная опора ВО4</div>
<div class="t" style="top:246.99px;font-size:6.80px;line-height:7.82px;color:#1c1c1c;left:162.60px;">БУ</div>
<div class="t" style="top:246.99px;font-size:6.80px;line-height:7.82px;color:#1c1c1c;left:-48.00px;width:300px;text-align:right;">724 401,95</div>
<div class="t" style="top:246.99px;font-size:6.80px;line-height:7.82px;color:#1c1c1c;left:200.70px;width:300px;text-align:right;">724 401,95</div>
<div class="t" style="top:255.87px;font-size:6.80px;line-height:7.82px;color:#1c1c1c;left:65.90px;white-space:pre;">(пролет 5-6 право)</div>
<div class="t" style="top:255.87px;font-size:6.80px;line-height:7.82px;color:#1c1c1c;left:162.60px;">Кол.</div>
<div class="t" style="top:255.87px;font-size:6.80px;line-height:7.82px;color:#1c1c1c;left:-48.00px;width:300px;text-align:right;">1,000</div>
<div class="t" style="top:255.87px;font-size:6.80px;line-height:7.82px;color:#1c1c1c;left:200.70px;width:300px;text-align:right;">1,000</div>
<div class="t" style="top:264.75px;font-size:6.80px;line-height:7.82px;color:#1c1c1c;left:65.90px;white-space:pre;">Временная опора ВО6</div>
<div class="t" style="top:264.75px;font-size:6.80px;line-height:7.82px;color:#1c1c1c;left:162.60px;">БУ</div>
<div class="t" style="top:264.75px;font-size:6.80px;line-height:7.82px;color:#1c1c1c;left:-48.00px;width:300px;text-align:right;">4 633 621,47</div>
<div class="t" style="top:264.75px;font-size:6.80px;line-height:7.82px;color:#1c1c1c;left:200.70px;width:300px;text-align:right;">4 633 621,47</div>
<div class="t" style="top:273.63px;font-size:6.80px;line-height:7.82px;color:#1c1c1c;left:65.90px;white-space:pre;">(пролет 6-7 право)</div>
<div class="t" style="top:273.63px;font-size:6.80px;line-height:7.82px;color:#1c1c1c;left:162.60px;">Кол.</div>
<div class="t" style="top:273.63px;font-size:6.80px;line-height:7.82px;color:#1c1c1c;left:-48.00px;width:300px;text-align:right;">1,000</div>
<div class="t" style="top:273.63px;font-size:6.80px;line-height:7.82px;color:#1c1c1c;left:200.70px;width:300px;text-align:right;">1,000</div>
<div class="t" style="top:282.51px;font-size:6.80px;line-height:7.82px;color:#1c1c1c;left:65.90px;white-space:pre;">Временное силовое</div>
<div class="t" style="top:282.51px;font-size:6.80px;line-height:7.82px;color:#1c1c1c;left:162.60px;">БУ</div>
<div class="t" style="top:282.51px;font-size:6.80px;line-height:7.82px;color:#1c1c1c;left:-48.00px;width:300px;text-align:right;">2 252 250,00</div>
<div class="t" style="top:282.51px;font-size:6.80px;line-height:7.82px;color:#1c1c1c;left:200.70px;width:300px;text-align:right;">2 252 250,00</div>
<div class="t" style="top:291.39px;font-size:6.80px;line-height:7.82px;color:#1c1c1c;left:65.90px;white-space:pre;">ограждение</div>
<div class="t" style="top:291.39px;font-size:6.80px;line-height:7.82px;color:#1c1c1c;left:162.60px;">Кол.</div>
<div class="t" style="top:291.39px;font-size:6.80px;line-height:7.82px;color:#1c1c1c;left:-48.00px;width:300px;text-align:right;">1,000</div>
<div class="t" style="top:291.39px;font-size:6.80px;line-height:7.82px;color:#1c1c1c;left:200.70px;width:300px;text-align:right;">1,000</div>
<div class="t" style="top:300.27px;font-size:6.80px;line-height:7.82px;color:#1c1c1c;left:65.90px;white-space:pre;">ГРО</div>
<div class="t" style="top:300.27px;font-size:6.80px;line-height:7.82px;color:#1c1c1c;left:162.60px;">БУ</div>
<div class="t" style="top:300.27px;font-size:6.80px;line-height:7.82px;color:#1c1c1c;left:-48.00px;width:300px;text-align:right;">6 577,09</div>
<div class="t" style="top:300.27px;font-size:6.80px;line-height:7.82px;color:#1c1c1c;left:200.70px;width:300px;text-align:right;">6 577,09</div>
<div class="t" style="top:309.15px;font-size:6.80px;line-height:7.82px;color:#1c1c1c;left:162.60px;">Кол.</div>
<div class="t" style="top:309.15px;font-size:6.80px;line-height:7.82px;color:#1c1c1c;left:-48.00px;width:300px;text-align:right;">1,000</div>
<div class="t" style="top:309.15px;font-size:6.80px;line-height:7.82px;color:#1c1c1c;left:200.70px;width:300px;text-align:right;">1,000</div>
<div class="t" style="top:318.03px;font-size:6.80px;line-height:7.82px;color:#1c1c1c;left:65.90px;white-space:pre;">Клетка К1.1* (100мм)</div>
<div class="t" style="top:318.03px;font-size:6.80px;line-height:7.82px;color:#1c1c1c;left:162.60px;">БУ</div>
<div class="t" style="top:318.03px;font-size:6.80px;line-height:7.82px;color:#1c1c1c;left:-48.00px;width:300px;text-align:right;">132 855,20</div>
<div class="t" style="top:318.03px;font-size:6.80px;line-height:7.82px;color:#1c1c1c;left:200.70px;width:300px;text-align:right;">132 855,20</div>
<div class="t" style="top:326.91px;font-size:6.80px;line-height:7.82px;color:#1c1c1c;left:162.60px;">Кол.</div>
<div class="t" style="top:326.91px;font-size:6.80px;line-height:7.82px;color:#1c1c1c;left:-48.00px;width:300px;text-align:right;">56,000</div>
<div class="t" style="top:326.91px;font-size:6.80px;line-height:7.82px;color:#1c1c1c;left:200.70px;width:300px;text-align:right;">56,000</div>
<div class="t" style="top:335.79px;font-size:6.80px;line-height:7.82px;color:#1c1c1c;left:65.90px;white-space:pre;">Клетка К1.2* (50мм)</div>
<div class="t" style="top:335.79px;font-size:6.80px;line-height:7.82px;color:#1c1c1c;left:162.60px;">БУ</div>
<div class="t" style="top:335.79px;font-size:6.80px;line-height:7.82px;color:#1c1c1c;left:-48.00px;width:300px;text-align:right;">32 026,02</div>
<div class="t" style="top:335.79px;font-size:6.80px;line-height:7.82px;color:#1c1c1c;left:200.70px;width:300px;text-align:right;">32 026,02</div>
<div class="t" style="top:344.67px;font-size:6.80px;line-height:7.82px;color:#1c1c1c;left:162.60px;">Кол.</div>
<div class="t" style="top:344.67px;font-size:6.80px;line-height:7.82px;color:#1c1c1c;left:-48.00px;width:300px;text-align:right;">8,000</div>
<div class="t" style="top:344.67px;font-size:6.80px;line-height:7.82px;color:#1c1c1c;left:200.70px;width:300px;text-align:right;">8,000</div>
<div class="t" style="top:353.55px;font-size:6.80px;line-height:7.82px;color:#1c1c1c;left:65.90px;white-space:pre;">Клетка К1* (150мм)</div>
<div class="t" style="top:353.55px;font-size:6.80px;line-height:7.82px;color:#1c1c1c;left:162.60px;">БУ</div>
<div class="t" style="top:353.55px;font-size:6.80px;line-height:7.82px;color:#1c1c1c;left:-48.00px;width:300px;text-align:right;">175 280,84</div>
<div class="t" style="top:353.55px;font-size:6.80px;line-height:7.82px;color:#1c1c1c;left:200.70px;width:300px;text-align:right;">175 280,84</div>
<div class="t" style="top:362.43px;font-size:6.80px;line-height:7.82px;color:#1c1c1c;left:162.60px;">Кол.</div>
<div class="t" style="top:362.43px;font-size:6.80px;line-height:7.82px;color:#1c1c1c;left:-48.00px;width:300px;text-align:right;">70,000</div>
<div class="t" style="top:362.43px;font-size:6.80px;line-height:7.82px;color:#1c1c1c;left:200.70px;width:300px;text-align:right;">70,000</div>
<div class="t" style="top:371.31px;font-size:6.80px;line-height:7.82px;color:#1c1c1c;left:65.90px;white-space:pre;">Консоли для монтажа</div>
<div class="t" style="top:371.31px;font-size:6.80px;line-height:7.82px;color:#1c1c1c;left:162.60px;">БУ</div>
<div class="t" style="top:371.31px;font-size:6.80px;line-height:7.82px;color:#1c1c1c;left:-48.00px;width:300px;text-align:right;">139 056,40</div>
<div class="t" style="top:371.31px;font-size:6.80px;line-height:7.82px;color:#1c1c1c;left:200.70px;width:300px;text-align:right;">139 056,40</div>
<div class="t" style="top:380.19px;font-size:6.80px;line-height:7.82px;color:#1c1c1c;left:65.90px;white-space:pre;">консольных ортотропных</div>
<div class="t" style="top:380.19px;font-size:6.80px;line-height:7.82px;color:#1c1c1c;left:162.60px;">Кол.</div>
<div class="t" style="top:380.19px;font-size:6.80px;line-height:7.82px;color:#1c1c1c;left:-48.00px;width:300px;text-align:right;">56,000</div>
<div class="t" style="top:380.19px;font-size:6.80px;line-height:7.82px;color:#1c1c1c;left:200.70px;width:300px;text-align:right;">56,000</div>
<div class="t" style="top:389.07px;font-size:6.80px;line-height:7.82px;color:#1c1c1c;left:65.90px;white-space:pre;">Лестница</div>
<div class="t" style="top:389.07px;font-size:6.80px;line-height:7.82px;color:#1c1c1c;left:162.60px;">БУ</div>
<div class="t" style="top:389.07px;font-size:6.80px;line-height:7.82px;color:#1c1c1c;left:-48.00px;width:300px;text-align:right;">10 340,98</div>
<div class="t" style="top:389.07px;font-size:6.80px;line-height:7.82px;color:#1c1c1c;left:200.70px;width:300px;text-align:right;">10 340,98</div>
<div class="t" style="top:397.95px;font-size:6.80px;line-height:7.82px;color:#1c1c1c;left:162.60px;">Кол.</div>
<div class="t" style="top:397.95px;font-size:6.80px;line-height:7.82px;color:#1c1c1c;left:-48.00px;width:300px;text-align:right;">8,000</div>
<div class="t" style="top:397.95px;font-size:6.80px;line-height:7.82px;color:#1c1c1c;left:200.70px;width:300px;text-align:right;">8,000</div>
<div class="t" style="top:406.83px;font-size:6.80px;line-height:7.82px;color:#1c1c1c;left:65.90px;white-space:pre;">Люлька монтажная</div>
<div class="t" style="top:406.83px;font-size:6.80px;line-height:7.82px;color:#1c1c1c;left:162.60px;">БУ</div>
<div class="t" style="top:406.83px;font-size:6.80px;line-height:7.82px;color:#1c1c1c;left:-48.00px;width:300px;text-align:right;">27 334,93</div>
<div class="t" style="top:406.83px;font-size:6.80px;line-height:7.82px;color:#1c1c1c;left:200.70px;width:300px;text-align:right;">27 334,93</div>
<div class="t" style="top:415.71px;font-size:6.80px;line-height:7.82px;color:#1c1c1c;left:162.60px;">Кол.</div>
<div class="t" style="top:415.71px;font-size:6.80px;line-height:7.82px;color:#1c1c1c;left:-48.00px;width:300px;text-align:right;">12,000</div>
<div class="t" style="top:415.71px;font-size:6.80px;line-height:7.82px;color:#1c1c1c;left:200.70px;width:300px;text-align:right;">12,000</div>
<div class="t" style="top:424.59px;font-size:6.80px;line-height:7.82px;color:#1c1c1c;left:65.90px;white-space:pre;">п.100, 100.1 - Опора № 8</div>
<div class="t" style="top:424.59px;font-size:6.80px;line-height:7.82px;color:#1c1c1c;left:162.60px;">БУ</div>
<div class="t" style="top:424.59px;font-size:6.80px;line-height:7.82px;color:#1c1c1c;left:-48.00px;width:300px;text-align:right;">19 827,50</div>
<div class="t" style="top:424.59px;font-size:6.80px;line-height:7.82px;color:#1c1c1c;left:200.70px;width:300px;text-align:right;">19 827,50</div>
<div class="t" style="top:433.47px;font-size:6.80px;line-height:7.82px;color:#1c1c1c;left:162.60px;">Кол.</div>
<div class="t" style="top:433.47px;font-size:6.80px;line-height:7.82px;color:#1c1c1c;left:-48.00px;width:300px;text-align:right;">1,000</div>
<div class="t" style="top:433.47px;font-size:6.80px;line-height:7.82px;color:#1c1c1c;left:200.70px;width:300px;text-align:right;">1,000</div>
<div class="t" style="top:442.35px;font-size:6.80px;line-height:7.82px;color:#1c1c1c;left:65.90px;white-space:pre;">п.105, 106 - Опора №1 (Этап</div>
<div class="t" style="top:442.35px;font-size:6.80px;line-height:7.82px;color:#1c1c1c;left:162.60px;">БУ</div>
<div class="t" style="top:442.35px;font-size:6.80px;line-height:7.82px;color:#1c1c1c;left:-48.00px;width:300px;text-align:right;">46 446,91</div>
<div class="t" style="top:442.35px;font-size:6.80px;line-height:7.82px;color:#1c1c1c;left:200.70px;width:300px;text-align:right;">46 446,91</div>
<div class="t" style="top:451.23px;font-size:6.80px;line-height:7.82px;color:#1c1c1c;left:65.90px;white-space:pre;">1)</div>
<div class="t" style="top:451.23px;font-size:6.80px;line-height:7.82px;color:#1c1c1c;left:162.60px;">Кол.</div>
<div class="t" style="top:451.23px;font-size:6.80px;line-height:7.82px;color:#1c1c1c;left:-48.00px;width:300px;text-align:right;">2,000</div>
<div class="t" style="top:451.23px;font-size:6.80px;line-height:7.82px;color:#1c1c1c;left:200.70px;width:300px;text-align:right;">2,000</div>
<div class="t" style="top:460.11px;font-size:6.80px;line-height:7.82px;color:#1c1c1c;left:65.90px;white-space:pre;">п.122, 123 - Опора № 8</div>
<div class="t" style="top:460.11px;font-size:6.80px;line-height:7.82px;color:#1c1c1c;left:162.60px;">БУ</div>
<div class="t" style="top:460.11px;font-size:6.80px;line-height:7.82px;color:#1c1c1c;left:-48.00px;width:300px;text-align:right;">49 815,74</div>
<div class="t" style="top:460.11px;font-size:6.80px;line-height:7.82px;color:#1c1c1c;left:200.70px;width:300px;text-align:right;">49 815,74</div>
<div class="t" style="top:468.99px;font-size:6.80px;line-height:7.82px;color:#1c1c1c;left:162.60px;">Кол.</div>
<div class="t" style="top:468.99px;font-size:6.80px;line-height:7.82px;color:#1c1c1c;left:-48.00px;width:300px;text-align:right;">1,000</div>
<div class="t" style="top:468.99px;font-size:6.80px;line-height:7.82px;color:#1c1c1c;left:200.70px;width:300px;text-align:right;">1,000</div>
<div class="t" style="top:477.87px;font-size:6.80px;line-height:7.82px;color:#1c1c1c;left:65.90px;white-space:pre;">п.138.2 - ОП2п (1-я очередь)</div>
<div class="t" style="top:477.87px;font-size:6.80px;line-height:7.82px;color:#1c1c1c;left:162.60px;">БУ</div>
<div class="t" style="top:477.87px;font-size:6.80px;line-height:7.82px;color:#1c1c1c;left:-48.00px;width:300px;text-align:right;">50 896,51</div>
<div class="t" style="top:477.87px;font-size:6.80px;line-height:7.82px;color:#1c1c1c;left:200.70px;width:300px;text-align:right;">50 896,51</div>
<div class="t" style="top:486.75px;font-size:6.80px;line-height:7.82px;color:#1c1c1c;left:162.60px;">Кол.</div>
<div class="t" style="top:486.75px;font-size:6.80px;line-height:7.82px;color:#1c1c1c;left:-48.00px;width:300px;text-align:right;">3,000</div>
<div class="t" style="top:486.75px;font-size:6.80px;line-height:7.82px;color:#1c1c1c;left:200.70px;width:300px;text-align:right;">3,000</div>
<div class="t" style="top:495.63px;font-size:6.80px;line-height:7.82px;color:#1c1c1c;left:65.90px;white-space:pre;">п.138.3 -  ОП2п (1-я очередь)</div>
<div class="t" style="top:495.63px;font-size:6.80px;line-height:7.82px;color:#1c1c1c;left:162.60px;">БУ</div>
<div class="t" style="top:495.63px;font-size:6.80px;line-height:7.82px;color:#1c1c1c;left:-48.00px;width:300px;text-align:right;">61 939,68</div>
<div class="t" style="top:495.63px;font-size:6.80px;line-height:7.82px;color:#1c1c1c;left:200.70px;width:300px;text-align:right;">61 939,68</div>
<div class="t" style="top:504.51px;font-size:6.80px;line-height:7.82px;color:#1c1c1c;left:162.60px;">Кол.</div>
<div class="t" style="top:504.51px;font-size:6.80px;line-height:7.82px;color:#1c1c1c;left:-48.00px;width:300px;text-align:right;">3,000</div>
<div class="t" style="top:504.51px;font-size:6.80px;line-height:7.82px;color:#1c1c1c;left:200.70px;width:300px;text-align:right;">3,000</div>
<div class="t" style="top:513.39px;font-size:6.80px;line-height:7.82px;color:#1c1c1c;left:65.90px;white-space:pre;">п.138.4 - Опора № 3</div>
<div class="t" style="top:513.39px;font-size:6.80px;line-height:7.82px;color:#1c1c1c;left:162.60px;">БУ</div>
<div class="t" style="top:513.39px;font-size:6.80px;line-height:7.82px;color:#1c1c1c;left:-48.00px;width:300px;text-align:right;">60 768,01</div>
<div class="t" style="top:513.39px;font-size:6.80px;line-height:7.82px;color:#1c1c1c;left:200.70px;width:300px;text-align:right;">60 768,01</div>
<div class="t" style="top:522.27px;font-size:6.80px;line-height:7.82px;color:#1c1c1c;left:162.60px;">Кол.</div>
<div class="t" style="top:522.27px;font-size:6.80px;line-height:7.82px;color:#1c1c1c;left:-48.00px;width:300px;text-align:right;">3,000</div>
<div class="t" style="top:522.27px;font-size:6.80px;line-height:7.82px;color:#1c1c1c;left:200.70px;width:300px;text-align:right;">3,000</div>
<div class="t" style="top:531.15px;font-size:6.80px;line-height:7.82px;color:#1c1c1c;left:65.90px;white-space:pre;">п.181.1 - Пролет ОПМ-ОП5</div>
<div class="t" style="top:531.15px;font-size:6.80px;line-height:7.82px;color:#1c1c1c;left:162.60px;">БУ</div>
<div class="t" style="top:531.15px;font-size:6.80px;line-height:7.82px;color:#1c1c1c;left:-48.00px;width:300px;text-align:right;">28 357 904,90</div>
<div class="t" style="top:531.15px;font-size:6.80px;line-height:7.82px;color:#1c1c1c;left:200.70px;width:300px;text-align:right;">28 357 904,90</div>
<div class="a" style="left:315.40px;top:298.94px;width:63.70px;height:10.08px;background:transparent;box-sizing:border-box;border:1.1px solid #217346;"></div>
<div class="a" style="left:377.40px;top:307.32px;width:2.50px;height:2.50px;background:#217346;box-shadow:0 0 0 0.7px #fff;"></div>
<div class="a" style="left:0.00px;top:535.40px;width:600.00px;height:16.00px;background:#e6e6e6;"></div>
<div class="a" style="left:0.00px;top:535.00px;width:600.00px;height:0.80px;background:#bdbdbd;"></div>
<div class="a" style="left:0.00px;top:550.00px;width:600.00px;height:8.00px;background:#f3f3f3;"></div>
<div class="a" style="left:53.70px;top:535.00px;width:36.50px;height:13.30px;background:#fff;"></div>
<div class="a" style="left:53.70px;top:548.20px;width:36.50px;height:1.30px;background:#217346;"></div>
<div class="a" style="left:519.00px;top:539.30px;width:82.00px;height:8.70px;background:#fff;box-sizing:border-box;border:0.7px solid #c4c4c4;border-right:0;"></div>
<div class="a" style="left:527.55px;top:539.30px;width:0.70px;height:8.70px;background:#c4c4c4;"></div>
<div class="a" style="left:510.40px;top:540.40px;width:0.90px;height:0.90px;background:#a8a8a8;"></div>
<div class="a" style="left:510.40px;top:542.40px;width:0.90px;height:0.90px;background:#a8a8a8;"></div>
<div class="a" style="left:510.40px;top:544.40px;width:0.90px;height:0.90px;background:#a8a8a8;"></div>
<div class="t" style="left:6.70px;top:24.82px;font-size:6.75px;line-height:7.76px;color:#444;">Файл</div><div class="t" style="left:39.30px;top:24.60px;font-size:7.13px;line-height:8.20px;color:#333;font-weight:bold;">Главная</div><div class="t" style="left:84.00px;top:24.79px;font-size:6.81px;line-height:7.83px;color:#444;">Вставка</div><div class="t" style="left:128.00px;top:24.71px;font-size:6.94px;line-height:7.99px;color:#444;">Разметка страницы</div><div class="t" style="left:211.00px;top:24.74px;font-size:6.89px;line-height:7.93px;color:#444;">Формулы</div><div class="t" style="left:259.00px;top:24.72px;font-size:6.92px;line-height:7.96px;color:#444;">Данные</div><div class="t" style="left:303.00px;top:24.60px;font-size:7.12px;line-height:8.19px;color:#444;">Рецензирование</div><div class="t" style="left:376.00px;top:24.73px;font-size:6.91px;line-height:7.94px;color:#444;">Вид</div><div class="t" style="left:404.00px;top:24.56px;font-size:7.20px;line-height:8.28px;color:#444;letter-spacing:0.091px;">Разработчик</div><div class="t" style="left:464.00px;top:24.56px;font-size:7.20px;line-height:8.28px;color:#444;letter-spacing:0.036px;">Справка</div><div class="t" style="left:121.50px;top:6.67px;font-size:6.49px;line-height:7.46px;color:#fff;white-space:pre;">Оборотно-сальдовая ведомость по счету 10 за Апрель 2024 г. (1).xlsx  -  Excel</div><div class="t" style="left:391.00px;top:6.15px;font-size:7.40px;line-height:8.51px;color:#1e5c3a;">Поиск</div><div class="t" style="left:3.60px;top:59.75px;font-size:6.70px;line-height:7.70px;color:#444;letter-spacing:-0.250px;">Вставить</div><div class="t" style="left:2.00px;top:81.65px;font-size:6.70px;line-height:7.70px;color:#444;letter-spacing:-0.294px;">Буфер обмена</div><div class="t" style="left:64.00px;top:45.58px;font-size:6.99px;line-height:8.04px;color:#333;">Arial</div><div class="t" style="left:133.00px;top:45.58px;font-size:7.00px;line-height:8.05px;color:#333;letter-spacing:0.106px;">9</div><div class="t" style="left:107.00px;top:81.65px;font-size:6.70px;line-height:7.70px;color:#444;letter-spacing:-0.209px;">Шрифт</div><div class="t" style="left:265.80px;top:81.65px;font-size:6.70px;line-height:7.70px;color:#444;letter-spacing:-0.244px;">Выравнивание</div><div class="t" style="left:277.50px;top:45.55px;font-size:6.70px;line-height:7.70px;color:#333;letter-spacing:-0.130px;">Переносить текст</div><div class="t" style="left:277.50px;top:63.45px;font-size:6.70px;line-height:7.70px;color:#333;letter-spacing:-0.117px;">Объединить и поместить в центре</div><div class="t" style="left:405.00px;top:45.69px;font-size:6.81px;line-height:7.83px;color:#333;">Общий</div><div class="t" style="left:428.00px;top:81.65px;font-size:6.70px;line-height:7.70px;color:#444;letter-spacing:-0.355px;">Число</div><div class="t" style="left:505.60px;top:59.75px;font-size:6.70px;line-height:7.70px;color:#444;letter-spacing:-0.023px;">Условное</div><div class="t" style="left:491.00px;top:68.55px;font-size:6.70px;line-height:7.70px;color:#444;letter-spacing:-0.086px;">форматирование</div><div class="t" style="left:552.40px;top:59.59px;font-size:6.97px;line-height:8.02px;color:#444;">Форматировать</div><div class="t" style="left:555.00px;top:68.55px;font-size:6.70px;line-height:7.70px;color:#444;letter-spacing:-0.063px;">как таблицу</div><div class="t" style="left:550.00px;top:81.65px;font-size:6.70px;line-height:7.70px;color:#444;letter-spacing:-0.361px;">Стили</div><div class="t" style="left:2.50px;top:553.08px;font-size:6.64px;line-height:7.63px;color:#4a4a4a;">Готово</div><div class="t" style="left:60.50px;top:538.23px;font-size:6.90px;line-height:7.93px;color:#217346;letter-spacing:-0.296px;font-weight:bold;">Лист_1</div><div class="t" style="left:5.20px;top:100.05px;font-size:6.70px;line-height:7.70px;color:#222;letter-spacing:-0.075px;">E21</div>
<svg style="left:39px;top:129px" width="5" height="5" viewBox="0 0 5 5"><path d="M4.6 0.2V4.6H0.2Z" fill="#b5b5b5"/></svg>
<svg style="left:44.4px;top:190.5px" width="4" height="4" viewBox="0 0 4 4"><path d="M0 0H3.3L0 3.3Z" fill="#1a7a3a"/></svg>
<svg style="left:0;top:0" width="600" height="558" viewBox="0 0 600 558" font-family="Liberation Sans, sans-serif"><path d="M10.5 6.7H17.4L18.8 8.1V15.7H10.5Z" fill="none" stroke="#fff" stroke-width="0.9"/><path d="M12.5 6.9V10.3H16.8V6.9M12.3 15.5V12.3H17.1V15.5" fill="none" stroke="#fff" stroke-width="0.8"/><path d="M26.8 6.8V10.6H30.6" fill="none" stroke="#fff" stroke-width="0.9"/><path d="M27 10.4C28.8 7.6 32 6.8 33.8 8.6C35.4 10.6 33.8 12.6 29.4 15.8" fill="none" stroke="#fff" stroke-width="0.9"/><path d="M38.50 9.35L39.80 10.45L41.10 9.35" fill="none" stroke="#fff" stroke-width="0.8" opacity="1"/><g opacity="0.35"><path d="M56.2 6.8V10.6H52.4" fill="none" stroke="#fff" stroke-width="0.9"/><path d="M56 10.4C54.2 7.6 51 6.8 49.2 8.6C47.6 10.6 49.2 12.6 53.6 15.8" fill="none" stroke="#fff" stroke-width="0.9"/></g><path d="M59.70 9.35L61.00 10.45L62.30 9.35" fill="none" stroke="#fff" stroke-width="0.8" opacity="0.35"/><path d="M70.4 6.6H74.4L76.8 9V15.4H70.4Z M74.4 6.6V9H76.8" fill="none" stroke="#fff" stroke-width="0.9"/><path d="M85.2 13.6V8H88L89 9H92.4V10.4M85.2 13.6L86.8 10.4H94L92.4 13.6Z" fill="none" stroke="#fff" stroke-width="0.9" stroke-linejoin="round"/><path d="M103.8 8.8H107.6" stroke="#fff" stroke-width="0.8"/><path d="M103.8 10.4H107.6L105.7 12.4Z" fill="#fff"/><circle cx="381.4" cy="9" r="2.5" fill="none" stroke="#1e5c3a" stroke-width="0.8"/><path d="M379.6 10.8L376.4 14" stroke="#1e5c3a" stroke-width="0.9"/><rect x="11.5" y="43.5" width="11.5" height="13" fill="#fbf3e4" stroke="#e8a33d" stroke-width="1.1"/><path d="M14.2 44.6V42.6H15.8C16 41.2 18.4 41.2 18.6 42.6H20.2V44.6Z" fill="#f3f3f3" stroke="#777" stroke-width="0.7"/><rect x="18.3" y="47.7" width="7.2" height="9.8" fill="#fff" stroke="#555" stroke-width="0.8"/><path d="M15.60 71.45L17.00 72.55L18.40 71.45" fill="none" stroke="#444" stroke-width="0.85" opacity="1"/><path d="M36.2 41.2L39.6 47.2M40.2 41.2L36.8 47.2" stroke="#444" stroke-width="0.8" fill="none"/><circle cx="36.4" cy="48.1" r="1.1" fill="#3f8fd6"/><circle cx="40" cy="48.1" r="1.1" fill="#3f8fd6"/><path d="M36.4 55V53.8H33.8V60.4H36.2" fill="none" stroke="#555" stroke-width="0.8"/><path d="M36.6 55.4H40.6L42.8 57.6V62.4H36.6Z" fill="#fff" stroke="#555" stroke-width="0.8"/><rect x="39.6" y="59" width="1.4" height="1.4" fill="#888"/><path d="M46.40 57.45L47.80 58.55L49.20 57.45" fill="none" stroke="#444" stroke-width="0.85" opacity="1"/><path d="M34.4 71.2L39.4 68.4L42 72.4L37.6 74.8Z" fill="#f7d9b0" stroke="#e8872b" stroke-width="0.9" stroke-linejoin="round"/><path d="M39.4 69.6L42.6 67.2" stroke="#666" stroke-width="1.6"/><path d="M54.60 83.40H51.40V86.60" fill="none" stroke="#666" stroke-width="0.6"/><path d="M52.90 84.90L55.40 87.40M55.40 85.60V87.40H53.60" fill="none" stroke="#666" stroke-width="0.6"/><path d="M124.70 49.25L126.00 50.35L127.30 49.25" fill="none" stroke="#444" stroke-width="0.85" opacity="1"/><path d="M150.10 49.25L151.40 50.35L152.70 49.25" fill="none" stroke="#444" stroke-width="0.85" opacity="1"/><path d="M103.10 66.35L104.40 67.45L105.70 66.35" fill="none" stroke="#444" stroke-width="0.85" opacity="1"/><path d="M128.70 66.35L130.00 67.45L131.30 66.35" fill="none" stroke="#444" stroke-width="0.85" opacity="1"/><path d="M154.10 66.35L155.40 67.45L156.70 66.35" fill="none" stroke="#444" stroke-width="0.85" opacity="1"/><path d="M175.70 66.35L177.00 67.45L178.30 66.35" fill="none" stroke="#444" stroke-width="0.85" opacity="1"/><rect x="116" y="63" width="8" height="7.8" fill="#fff" stroke="#bbb" stroke-width="0.6"/><path d="M120 63V70.8M116 66.9H124" stroke="#bbb" stroke-width="0.6"/><path d="M115.6 70.9H124.4" stroke="#333" stroke-width="1"/><path d="M91.8 70.9H98" stroke="#777" stroke-width="0.6"/><path d="M145.2 63.4L148 66.2L145.6 68.4L143 65.8Z" fill="#fff" stroke="#555" stroke-width="0.7" stroke-linejoin="round"/><path d="M148.6 66.4C149.4 67.4 149.4 68.2 148.6 68.2C147.8 68.2 147.8 67.4 148.6 66.4Z" fill="#3f8fd6"/><rect x="141.6" y="69.4" width="8.6" height="2.1" fill="#ffee00"/><rect x="163" y="69.2" width="8.7" height="2.2" fill="#f00000"/><path d="M182.80 83.40H179.60V86.60" fill="none" stroke="#666" stroke-width="0.6"/><path d="M181.10 84.90L183.60 87.40M183.60 85.60V87.40H181.80" fill="none" stroke="#666" stroke-width="0.6"/><path d="M193.30 45.80H200.10" stroke="#444" stroke-width="0.62"/><path d="M194.30 47.70H199.10" stroke="#8a8a8a" stroke-width="0.62"/><path d="M193.30 49.70H200.10" stroke="#444" stroke-width="0.62"/><path d="M206.10 46.80H213.70" stroke="#444" stroke-width="0.62"/><path d="M207.10 49.10H212.70" stroke="#8a8a8a" stroke-width="0.62"/><path d="M206.10 51.40H213.70" stroke="#444" stroke-width="0.62"/><path d="M219.00 48.80H227.00" stroke="#444" stroke-width="0.62"/><path d="M220.00 51.10H226.00" stroke="#8a8a8a" stroke-width="0.62"/><path d="M219.00 53.40H227.00" stroke="#444" stroke-width="0.62"/><path d="M192.80 63.40H200.80" stroke="#444" stroke-width="0.62"/><path d="M192.80 65.70H198.00" stroke="#8a8a8a" stroke-width="0.62"/><path d="M192.80 68.10H200.80" stroke="#444" stroke-width="0.62"/><path d="M192.80 70.40H198.00" stroke="#8a8a8a" stroke-width="0.62"/><path d="M206.10 63.40H213.70" stroke="#444" stroke-width="0.62"/><path d="M207.30 65.70H212.50" stroke="#8a8a8a" stroke-width="0.62"/><path d="M206.10 68.10H213.70" stroke="#444" stroke-width="0.62"/><path d="M207.30 70.40H212.50" stroke="#8a8a8a" stroke-width="0.62"/><path d="M219.10 63.40H227.40" stroke="#444" stroke-width="0.62"/><path d="M221.90 65.70H227.40" stroke="#8a8a8a" stroke-width="0.62"/><path d="M219.10 68.10H227.40" stroke="#444" stroke-width="0.62"/><path d="M221.90 70.40H227.40" stroke="#8a8a8a" stroke-width="0.62"/><text x="236.4" y="49" font-size="5.2" fill="#555" transform="rotate(-35 238 48)">ab</text><path d="M238 53.4L244.6 47.6M244.8 49.8V47.4H242.4" fill="none" stroke="#3f8fd6" stroke-width="0.8"/><path d="M247.90 49.05L249.20 50.15L250.50 49.05" fill="none" stroke="#444" stroke-width="0.85" opacity="1"/><path d="M236.40 63.40H244.60" stroke="#444" stroke-width="0.62"/><path d="M240.80 65.70H244.60" stroke="#8a8a8a" stroke-width="0.62"/><path d="M240.80 68.10H244.60" stroke="#8a8a8a" stroke-width="0.62"/><path d="M236.40 70.40H244.60" stroke="#444" stroke-width="0.62"/><path d="M249.80 63.40H258.00" stroke="#444" stroke-width="0.62"/><path d="M254.20 65.70H258.00" stroke="#8a8a8a" stroke-width="0.62"/><path d="M254.20 68.10H258.00" stroke="#8a8a8a" stroke-width="0.62"/><path d="M249.80 70.40H258.00" stroke="#444" stroke-width="0.62"/><path d="M240 66.9H236.6M238 65.5L236.6 66.9L238 68.3" stroke="#2f83d4" stroke-width="0.8" fill="none"/><path d="M250 66.9H253.4M252 65.5L253.4 66.9L252 68.3" stroke="#2f83d4" stroke-width="0.8" fill="none"/><text x="267.4" y="49" font-size="4.6" fill="#444">ab</text><text x="267.4" y="53.2" font-size="4.6" fill="#444">c</text><path d="M272.4 50.2H274.4V52.4H270.8M271.8 51.4L270.6 52.4L271.8 53.4" fill="none" stroke="#3f8fd6" stroke-width="0.7"/><rect x="266.4" y="62.7" width="8.2" height="7.9" fill="#fff" stroke="#555" stroke-width="0.8"/><rect x="266.8" y="64.6" width="7.4" height="4.1" fill="#5aa7e6"/><path d="M269.1 62.7V64.6M271.9 62.7V64.6M269.1 68.7V70.6M271.9 68.7V70.6" stroke="#555" stroke-width="0.6"/><path d="M267.8 66.7H273.2M268.8 65.7L267.8 66.7L268.8 67.7M272.2 65.7L273.2 66.7L272.2 67.7" fill="none" stroke="#fff" stroke-width="0.6"/><path d="M387.50 66.95L388.80 68.05L390.10 66.95" fill="none" stroke="#444" stroke-width="0.85" opacity="1"/><path d="M395.00 83.40H391.80V86.60" fill="none" stroke="#666" stroke-width="0.6"/><path d="M393.30 84.90L395.80 87.40M395.80 85.60V87.40H394.00" fill="none" stroke="#666" stroke-width="0.6"/><path d="M475.30 49.25L476.60 50.35L477.90 49.25" fill="none" stroke="#444" stroke-width="0.85" opacity="1"/><rect x="404.2" y="64" width="9" height="5.2" fill="#f3f3f3" stroke="#444" stroke-width="0.8"/><path d="M405.6 65.4H411.8" stroke="#444" stroke-width="0.6" stroke-dasharray="1.2 0.6"/><circle cx="407" cy="67.3" r="0.9" fill="none" stroke="#444" stroke-width="0.5"/><rect x="409.2" y="66.4" width="4.6" height="5.6" rx="1" fill="#f08a24"/><path d="M409.2 68.2H413.8M409.2 70.1H413.8" stroke="#fff" stroke-width="0.5"/><path d="M417.30 66.65L418.60 67.75L419.90 66.65" fill="none" stroke="#444" stroke-width="0.85" opacity="1"/><text x="425.9" y="71" font-size="10.8" fill="#4a4a4a" textLength="8.8" lengthAdjust="spacingAndGlyphs">%</text><text x="439.2" y="69.3" font-size="5.8" fill="#8a8a8a" textLength="9.2" lengthAdjust="spacingAndGlyphs">000</text><path d="M462 64.8H457M458.8 63.2L457 64.8L458.8 66.4" fill="none" stroke="#2f83d4" stroke-width="0.9"/><text x="462.6" y="66.8" font-size="4.8" font-weight="bold" fill="#444">0</text><text x="458.6" y="71.6" font-size="4.8" font-weight="bold" fill="#444">,00</text><text x="472.6" y="66.8" font-size="4.8" font-weight="bold" fill="#444">,00</text><text x="475.6" y="71.6" font-size="4.8" font-weight="bold" fill="#444">0</text><path d="M470 69.8H475M473.2 68.2L475 69.8L473.2 71.4" fill="none" stroke="#2f83d4" stroke-width="0.9"/><path d="M481.20 83.40H478.00V86.60" fill="none" stroke="#666" stroke-width="0.6"/><path d="M479.50 84.90L482.00 87.40M482.00 85.60V87.40H480.20" fill="none" stroke="#666" stroke-width="0.6"/><rect x="512.6" y="42.7" width="15" height="12" fill="#fff" stroke="#555" stroke-width="0.6"/><rect x="515.4" y="43" width="7.8" height="3.6" fill="#f06a78"/><rect x="515.4" y="46.6" width="4.2" height="4" fill="#4f96dc"/><rect x="515.4" y="50.6" width="7.8" height="3.8" fill="#f27f8a"/><path d="M515.4 42.7V54.7M523.2 42.7V54.7M525.4 42.7V54.7M512.6 46.6H527.6M512.6 50.6H527.6" stroke="#777" stroke-width="0.45"/><path d="M545.50 72.25L546.80 73.35L548.10 72.25" fill="none" stroke="#444" stroke-width="0.85" opacity="1"/><rect x="569.2" y="42.6" width="15.4" height="12" fill="#fff" stroke="#666" stroke-width="0.6"/><rect x="574.4" y="46.6" width="10.2" height="8" fill="#5b9bd5"/><path d="M574.4 42.6V54.6M579.4 42.6V54.6M569.2 46.6H584.6M569.2 50.6H584.6" stroke="#888" stroke-width="0.45"/><path d="M584.6 46L578.6 53.2" stroke="#e8e8e8" stroke-width="2.2"/><path d="M585 45.6L579 52.6" stroke="#555" stroke-width="1.1"/><path d="M579.4 52L577 55.6L574.6 56.4L576 54Z" fill="#3f8fd6"/><path d="M594.30 72.25L595.60 73.35L596.90 72.25" fill="none" stroke="#444" stroke-width="0.85" opacity="1"/><path d="M50.0 101.6H53.6L51.8 103.8Z" fill="#555"/><path d="M82.1 100.6L87.7 106.2M87.7 100.6L82.1 106.2" stroke="#b4b4b4" stroke-width="0.8"/><path d="M101.5 103.6L103.7 106L108.3 100.6" fill="none" stroke="#b4b4b4" stroke-width="0.85"/><text x="121.6" y="105.8" font-family="Liberation Serif, serif" font-style="italic" font-weight="bold" font-size="9" fill="#333">f</text><text x="124.6" y="106.6" font-family="Liberation Serif, serif" font-style="italic" font-weight="bold" font-size="5.4" fill="#333">x</text><path d="M15.8 540.9V544.9L13.4 542.9Z" fill="#c2c2c2"/><path d="M29.2 540.9V544.9L31.6 542.9Z" fill="#c2c2c2"/><circle cx="112.4" cy="542.9" r="4.1" fill="none" stroke="#6a6a6a" stroke-width="0.7"/><path d="M110.1 542.9H114.7M112.4 540.6V545.2" stroke="#6a6a6a" stroke-width="0.8"/><path d="M525 541.6V545.8L522.2 543.7Z" fill="#444"/><rect x="35.4" y="553.6" width="7" height="5" fill="#d0d0d0" stroke="#666" stroke-width="0.6"/><path d="M35.4 555.2H42.4" stroke="#666" stroke-width="0.6"/><circle cx="41" cy="557.4" r="1.1" fill="#555"/></svg>
<div class="t" style="left:64.2px;top:62.2px;font-size:7.6px;line-height:9px;font-weight:bold;color:#333">Ж</div>
<div class="t" style="left:79px;top:62.2px;font-size:7.6px;line-height:9px;font-style:italic;color:#444">К</div>
<div class="t" style="left:92.2px;top:62.2px;font-size:7.6px;line-height:9px;color:#444;">Ч</div>
<div class="t" style="left:157.9px;top:44.4px;font-size:9.8px;line-height:10px;color:#444">A</div>
<div class="t" style="left:172.2px;top:44.6px;font-size:8px;line-height:9px;color:#444">A</div>
<div class="t" style="left:164.5px;top:62.4px;font-size:8.2px;line-height:8px;color:#444">A</div>
<svg style="left:0;top:0" width="600" height="558" viewBox="0 0 600 558"><path d="M164.3 46.9L165.6 45.6L166.9 46.9" fill="none" stroke="#3f8fd6" stroke-width="0.8"/><path d="M177.4 45.6L178.7 46.9L180 45.6" fill="none" stroke="#3f8fd6" stroke-width="0.8"/></svg>
</div></body></html>
